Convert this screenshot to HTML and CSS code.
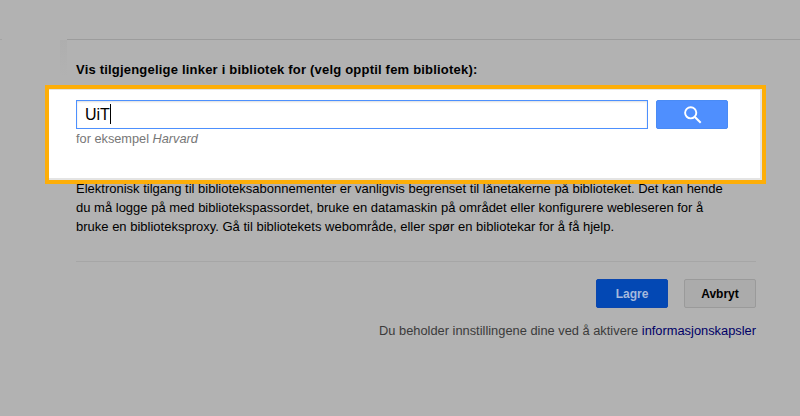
FILE: index.html
```html
<!DOCTYPE html>
<html lang="no">
<head>
    <meta charset="UTF-8">
    <meta name="viewport" content="width=device-width, initial-scale=1.0">
    <title>Biblioteklinker</title>
    <link rel="stylesheet" href="styles.css">
</head>
<body>
    <div class="panel">
        <h1 class="panel-title">Vis tilgjengelige linker i bibliotek for (velg opptil fem bibliotek):</h1>
        <div class="highlight">
            <form class="search-row">
                <div class="search-field">
                    <div class="search-input">UiT<span class="caret"></span></div>
                    <div class="search-hint">for eksempel <em>Harvard</em></div>
                </div>
                <button type="button" class="search-button" aria-label="Søk">
                    <svg width="20" height="20" viewBox="0 0 20 20" fill="none" stroke="#fff">
                        <circle cx="8.7" cy="7.8" r="5.6" stroke-width="1.9"/>
                        <path d="M12.9 12l5.8 5.8" stroke-width="2"/>
                    </svg>
                </button>
            </form>
        </div>
        <p class="info">Elektronisk tilgang til biblioteksabonnementer er vanligvis begrenset til lånetakerne på biblioteket. Det kan hende du må logge på med bibliotekspassordet, bruke en datamaskin på området eller konfigurere webleseren for å bruke en biblioteksproxy. Gå til bibliotekets webområde, eller spør en bibliotekar for å få hjelp.</p>
        <div class="actions">
            <button type="button" class="btn btn-save">Lagre</button>
            <button type="button" class="btn btn-cancel">Avbryt</button>
        </div>
        <p class="cookie-note">Du beholder innstillingene dine ved å aktivere <a href="#">informasjonskapsler</a></p>
    </div>
</body>
</html>
```

FILE: styles.css
```css
html, body {
    height: 100%;
}
body {
    margin: 0;
    padding: 39px 0 0 67px;
    box-sizing: border-box;
    overflow: hidden;
    background-color: #b2b2b2;
    font-family: "Liberation Sans", Arial, sans-serif;
    font-size: 13px;
    color: #000;
}
.panel {
    position: relative;
    padding-left: 9px;
    border-top: 1px solid #9c9c9c;
}
/* faint shadow at the top left corner of the panel */
.panel::before {
    content: "";
    position: absolute;
    top: 0;
    left: -7px;
    width: 7px;
    height: 36px;
    background: linear-gradient(to bottom, rgba(160, 160, 160, 0.22), rgba(178, 178, 178, 0));
}
/* stray bit of line at the window edge */
.panel::after {
    content: "";
    position: absolute;
    top: -1px;
    left: -67px;
    width: 2px;
    height: 1px;
    background-color: #a4a4a4;
}
.panel-title {
    margin: 0;
    padding-top: 22px;
    font-size: 13px;
    line-height: 15px;
    font-weight: bold;
    letter-spacing: 0.2px;
    color: #000;
}
.highlight {
    position: relative;
    z-index: 1;
    width: 686px;
    height: 80px;
    margin: 8px 0 -5px -31px;
    padding: 11px 0 0 27px;
    background-color: #fff;
    border: 4px solid #fdae08;
    box-shadow: inset 0 -2px 0 #e4e4e4, inset -2px 0 0 #e4e4e4, inset 0 1px 0 #e4e4e4;
}
.search-row {
    display: flex;
    gap: 8px;
}
.search-field {
    width: 572px;
}
.search-input {
    height: 27px;
    padding-left: 8px;
    border: 1px solid #4d90fe;
    box-shadow: inset 0 1px 2px #ddd;
    font-size: 16px;
    line-height: 27px;
}
.caret {
    display: inline-block;
    width: 1px;
    height: 20px;
    vertical-align: -4px;
    background-color: #000;
}
.search-hint {
    margin-top: 2px;
    font-size: 12.75px;
    line-height: 15px;
    color: #777;
}
.search-button {
    width: 72px;
    height: 29px;
    padding: 0;
    border: 1px solid #4a8bf5;
    border-radius: 2px;
    background-color: #4f8ffe;
    cursor: pointer;
}
.search-button svg {
    display: block;
    margin: 0 auto;
}
.info {
    width: 655px;
    margin: 0;
    font-size: 13px;
    line-height: 19px;
    color: #000;
}
.actions {
    display: flex;
    justify-content: flex-end;
    gap: 16px;
    width: 680px;
    margin-top: 25px;
    padding-top: 17px;
    border-top: 1px solid #a6a6a6;
}
.btn {
    width: 72px;
    height: 29px;
    padding: 0;
    border-radius: 2px;
    font-family: inherit;
    font-size: 12px;
    font-weight: bold;
    cursor: pointer;
}
.btn-save {
    border: 1px solid #0a46ae;
    background-color: #0348b4;
    color: #a5b9dd;
}
.btn-cancel {
    border: 1px solid #9a9a9a;
    background-color: #ababab;
    color: #000;
}
.cookie-note {
    width: 680px;
    margin: 15px 0 0;
    text-align: right;
    font-size: 12.85px;
    line-height: 15px;
    color: #3b3b3b;
}
.cookie-note a {
    color: #000066;
    text-decoration: none;
}
```
